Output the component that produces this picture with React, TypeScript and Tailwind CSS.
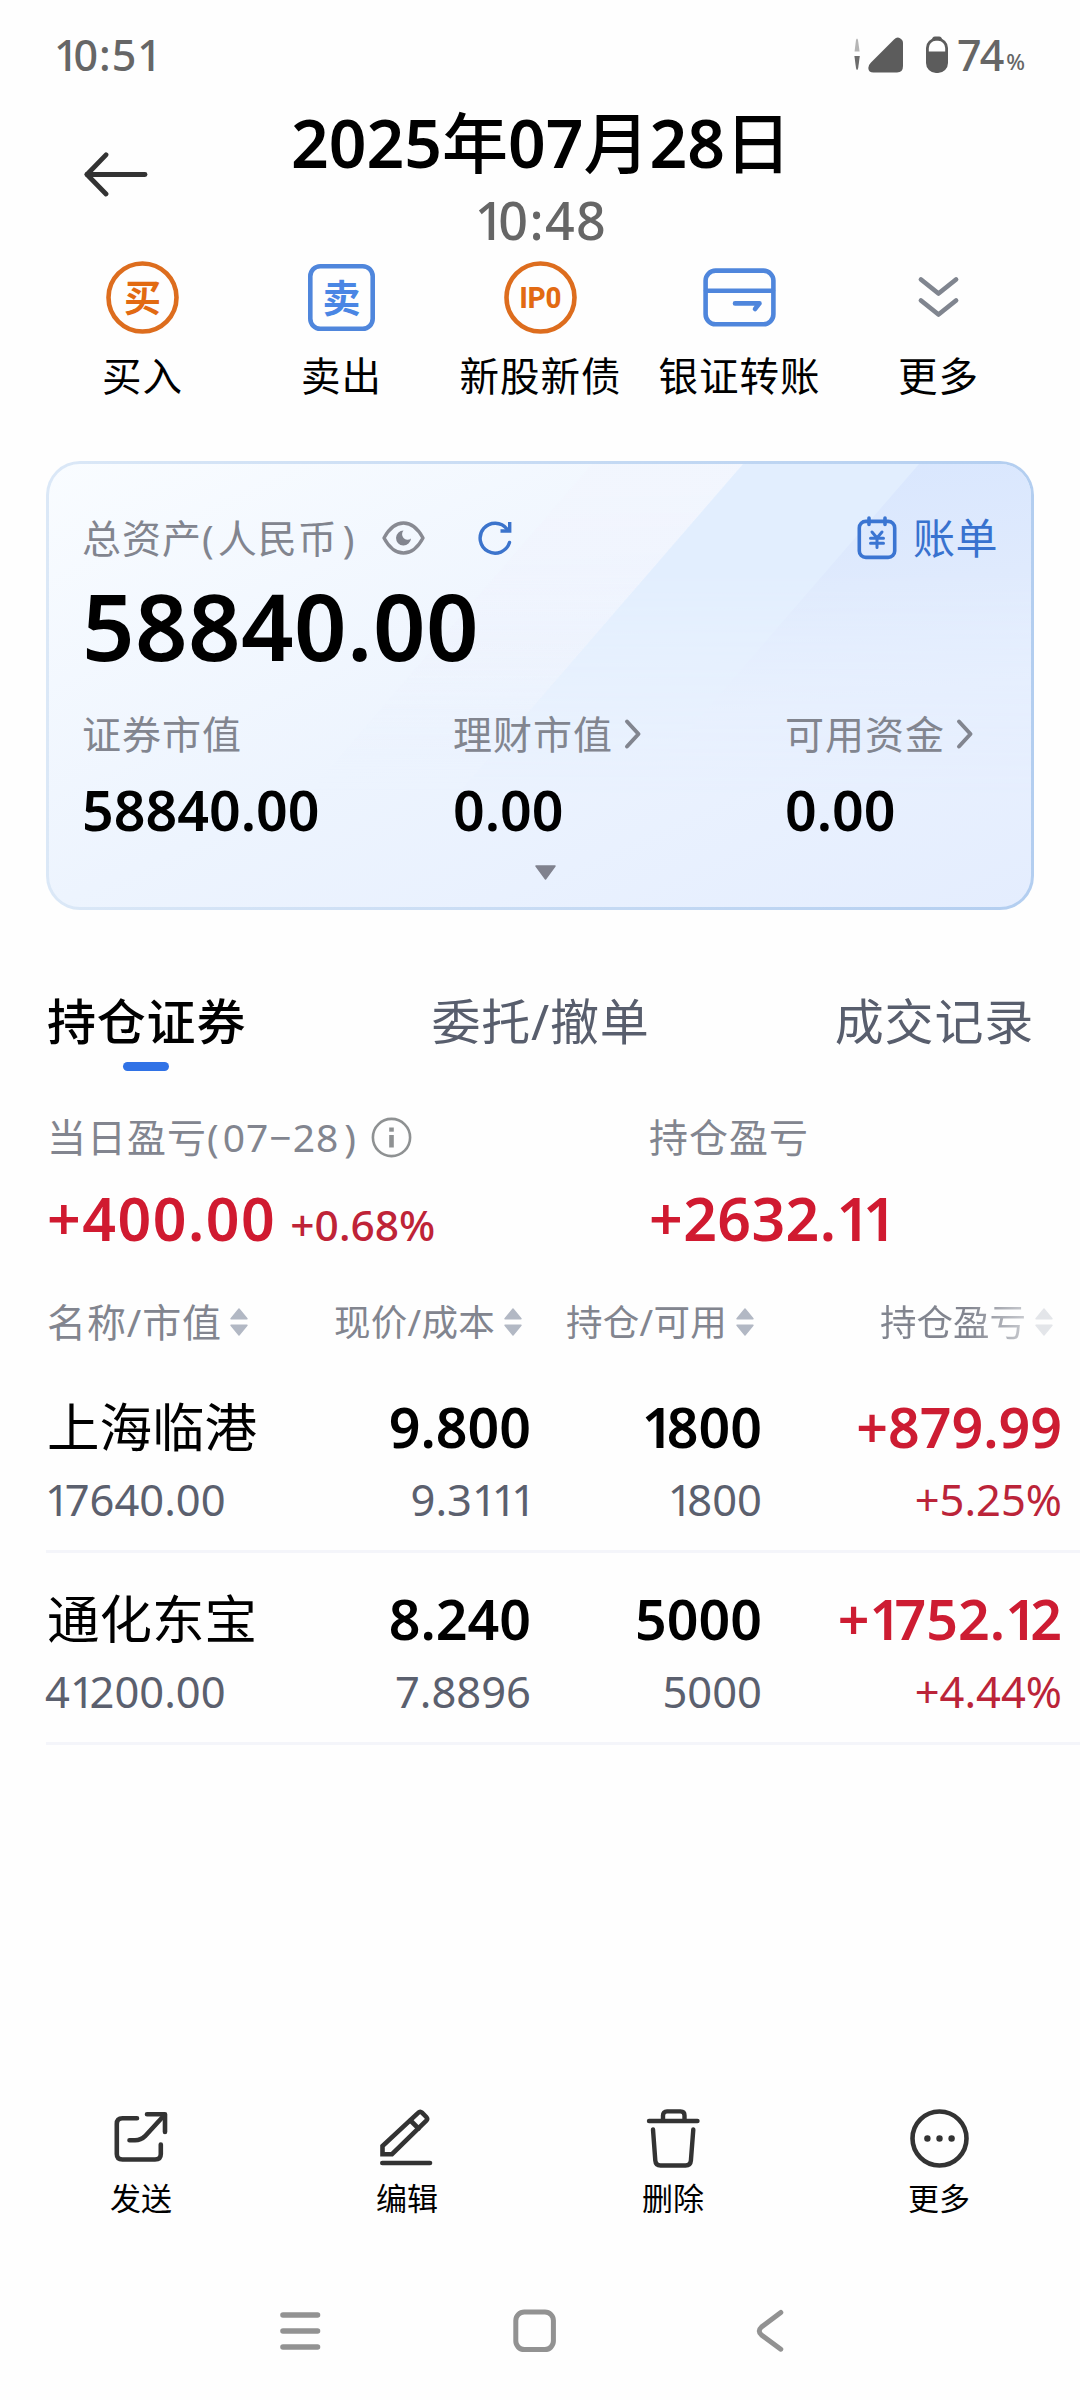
import React from "react";

const ORANGE = "#dd6d1e";
const BLUE = "#4f86dc";
const GREY = "#82858f";
const DARK = "#333333";

/* Figures with a narrow "1", as in the system's proportional digits. */
function Num({ children }: { children: string }) {
  return (
    <>
      {children.split(/(1+)/).filter(Boolean).map((part, i) =>
        part[0] === "1" ? <span key={i} className="tracking-[-0.12em]">{part}</span> : part
      )}
    </>
  );
}

function BuyIcon() {
  return (
    <svg width="73" height="73" viewBox="0 0 73 73" fill="none">
      <circle cx="36.5" cy="36.5" r="34" stroke={ORANGE} strokeWidth="4.6" />
      <text x="36.5" y="50.5" textAnchor="middle" fontSize="37" fontWeight="700" fill="#e26a12" className="font-['Noto_Sans_CJK_SC',sans-serif]">买</text>
    </svg>
  );
}

function SellIcon() {
  return (
    <svg width="73" height="73" viewBox="0 0 73 73" fill="none">
      <rect x="5.3" y="5.3" width="62.4" height="62.4" rx="10" stroke={BLUE} strokeWidth="4.6" />
      <text x="36.5" y="50.5" textAnchor="middle" fontSize="38" fontWeight="700" fill="#4a86e4" className="font-['Noto_Sans_CJK_SC',sans-serif]">卖</text>
    </svg>
  );
}

function IpoIcon() {
  return (
    <svg width="73" height="73" viewBox="0 0 73 73" fill="none">
      <circle cx="36.5" cy="36.5" r="34" stroke={ORANGE} strokeWidth="4.6" />
      <text x="15.5" y="47" textLength="42" lengthAdjust="spacingAndGlyphs" fontSize="30" fontWeight="800" fill="#e26a12" className="font-['Roboto',sans-serif]">IP0</text>
    </svg>
  );
}

function CardIcon() {
  return (
    <svg width="73" height="73" viewBox="0 0 73 73" fill="none" stroke={BLUE} strokeWidth="4.6" strokeLinecap="round" strokeLinejoin="round">
      <rect x="2.6" y="9.6" width="67.8" height="53.6" rx="10" />
      <path d="M3 29.8H70" />
      <path d="M32 42.4H56.5L52 48" />
    </svg>
  );
}

function ChevronsIcon() {
  return (
    <svg width="73" height="73" viewBox="0 0 73 73" fill="none" stroke="#80858f" strokeWidth="4.8" strokeLinecap="round" strokeLinejoin="round">
      <path d="M19 18.5L36.5 32.5L54 18.5" />
      <path d="M19 39.5L36.5 53.5L54 39.5" />
    </svg>
  );
}

function ChevronRight() {
  return (
    <svg width="18" height="32" viewBox="0 0 18 32" fill="none" stroke={GREY} strokeWidth="4" strokeLinecap="round" strokeLinejoin="round">
      <path d="M3 3.5L14.5 16L3 28.5" />
    </svg>
  );
}

function Sort() {
  return (
    <svg width="18" height="28" viewBox="0 0 18 28" fill="#b2b8c4" stroke="#b2b8c4" strokeWidth="1.4" strokeLinejoin="round">
      <path d="M9 1L17 10.7H1Z" />
      <path d="M9 27L17 17.3H1Z" />
    </svg>
  );
}

function SendIcon() {
  return (
    <svg width="59" height="59" viewBox="0 0 59 59" fill="none" stroke={DARK} strokeWidth="4.6" strokeLinecap="round" strokeLinejoin="round">
      <path d="M25 9.3H10.5Q4.8 9.3 4.8 15V45Q4.8 50.5 10.5 50.5H43Q48.8 50.5 48.8 45V35.5" />
      <path d="M35 5.2H53V23" />
      <path d="M17.5 31.3H23Q29 31.3 33 27.2L52 6.5" />
    </svg>
  );
}

function EditIcon() {
  return (
    <svg width="59" height="59" viewBox="0 0 59 59" fill="none" stroke={DARK} strokeWidth="4.6" strokeLinecap="round">
      <path d="M4.5 37V45.2H14L48.3 11.6Q50 9.8 48.3 8L44 3.6Q42.2 1.8 40.4 3.6L4.5 37Z" strokeLinejoin="miter" />
      <path d="M32.5 11.5L40.5 19.5" />
      <path d="M4.3 54H52" />
    </svg>
  );
}

function TrashIcon() {
  return (
    <svg width="59" height="59" viewBox="0 0 59 59" fill="none" stroke={DARK} strokeWidth="4.4" strokeLinecap="round" strokeLinejoin="round">
      <path d="M5 12H53.5" />
      <path d="M19 11V6.5Q19 2.4 23 2.4H36.5Q40.5 2.4 40.5 6.5V11" />
      <path d="M9 20.5L11.3 51.5Q11.7 56.5 16.5 56.5H41.5Q46.5 56.5 46.9 51.5L49.3 20.5" />
    </svg>
  );
}

function MoreIcon() {
  return (
    <svg width="59" height="59" viewBox="0 0 59 59" fill="none">
      <circle cx="29.5" cy="29.5" r="27" stroke={DARK} strokeWidth="4.6" />
      <g fill={DARK}>
        <circle cx="17.4" cy="29.5" r="3.2" />
        <circle cx="29.5" cy="29.5" r="3.2" />
        <circle cx="41.6" cy="29.5" r="3.2" />
      </g>
    </svg>
  );
}

const actions = [
  { label: "买入", icon: <BuyIcon /> },
  { label: "卖出", icon: <SellIcon /> },
  { label: "新股新债", icon: <IpoIcon /> },
  { label: "银证转账", icon: <CardIcon /> },
  { label: "更多", icon: <ChevronsIcon /> },
];

const tools = [
  { label: "发送", icon: <SendIcon /> },
  { label: "编辑", icon: <EditIcon /> },
  { label: "删除", icon: <TrashIcon /> },
  { label: "更多", icon: <MoreIcon /> },
];

const holdings = [
  { name: "上海临港", value: "17640.00", price: "9.800", cost: "9.3111", qty: "1800", avail: "1800", gain: "879.99", pct: "5.25%" },
  { name: "通化东宝", value: "41200.00", price: "8.240", cost: "7.8896", qty: "5000", avail: "5000", gain: "1752.12", pct: "4.44%" },
];

function StatusBar() {
  return (
    <div className="flex h-[106px] items-center pl-[54px] pr-[55px] pt-[3px] text-[#666666]">
      <span className="text-[43px] font-medium leading-[60px] tracking-[1px]"><Num>10:51</Num></span>
      <div className="ml-auto flex items-center">
        <svg width="50" height="36" viewBox="0 0 50 36">
          <path d="M0.6 14.5L2 3Q3 0 4 3L5.6 14.5Z" fill="#b5b5b5" />
          <path d="M0.4 19H5.8L4.2 31Q3 35 2 31Z" fill="#6c6c6c" />
          <path d="M17 25.5L40 2.5Q43 -0.5 46 1.2Q49 2.8 49 6V29Q49 35.5 43 35.5H19.5Q14.5 35.5 14.3 31Q14.3 28 17 25.5Z" fill="#5c5c5c" />
        </svg>
        <svg className="ml-[22px]" width="22" height="37" viewBox="0 0 22 37" fill="none">
          <path d="M6 4Q6 0.5 9 0.5H13Q16 0.5 16 4Z" fill="#5c5c5c" />
          <rect x="1.4" y="3.4" width="19.2" height="32.2" rx="8.5" stroke="#5c5c5c" strokeWidth="2.8" />
          <path d="M1.4 15.5H20.6V27Q20.6 35.6 12 35.6H10Q1.4 35.6 1.4 27Z" fill="#5c5c5c" />
        </svg>
        <span className="ml-[9px] text-[43px] font-medium leading-[60px] tracking-[-2px]">74</span>
        <span className="ml-[4px] mt-[12px] text-[22px] font-medium leading-[30px]">%</span>
      </div>
    </div>
  );
}

function Header() {
  return (
    <header className="flex h-[150px]">
      <div className="w-[163px] pl-[83px] pt-[46px]">
        <svg width="65" height="45" viewBox="0 0 65 45" fill="none" stroke={DARK} strokeWidth="4.8" strokeLinecap="round" strokeLinejoin="round">
          <path d="M62 22.5H4" />
          <path d="M23 2.8L4 22.5L23 42" />
        </svg>
      </div>
      <div className="flex flex-1 flex-col items-center pt-[3px]">
        <h1 className="whitespace-nowrap text-[66px] font-[560] leading-[66px] text-black">
          2025<span className="font-medium">年</span>07<span className="font-medium">月</span>28<span className="font-medium">日</span>
        </h1>
        <div className="mt-[15px] text-[52px] font-medium leading-[60px] tracking-[1.4px] text-[#666666]"><Num>10:48</Num></div>
      </div>
      <div className="w-[161px]" />
    </header>
  );
}

function AssetCard() {
  return (
    <section className="relative mx-[46px] h-[449px] overflow-hidden rounded-[34px] bg-gradient-to-r from-[#dbe8f7] to-[#b3cef0] p-[3px]">
      <div className="relative h-full overflow-hidden rounded-[31px] bg-gradient-to-br from-[#f9fcff] via-[#edf4fe] to-[#e4edfe]">
        <svg className="absolute inset-0" width="982" height="443" viewBox="0 0 982 443" aria-hidden="true">
          <defs>
            <linearGradient id="glow" x1="0" y1="0" x2="0" y2="1">
              <stop offset="0" stopColor="#f2f6fe" />
              <stop offset="0.6" stopColor="#eef2fd" stopOpacity="0.6" />
              <stop offset="1" stopColor="#e6effe" stopOpacity="0" />
            </linearGradient>
            <linearGradient id="mid" x1="0" y1="0" x2="0" y2="1">
              <stop offset="0" stopColor="#e2eefe" />
              <stop offset="0.6" stopColor="#e2eefe" />
              <stop offset="1" stopColor="#e4edfe" />
            </linearGradient>
            <linearGradient id="edge" x1="0" y1="0" x2="0.12" y2="1">
              <stop offset="0" stopColor="#d8e6fe" />
              <stop offset="0.35" stopColor="#dfeafd" />
              <stop offset="0.6" stopColor="#e3edfe" />
              <stop offset="1" stopColor="#e4edfe" />
            </linearGradient>
            <linearGradient id="fade" x1="0" y1="0" x2="0" y2="1">
              <stop offset="0.25" stopColor="#ffffff" />
              <stop offset="0.75" stopColor="#000000" />
            </linearGradient>
            <mask id="fadeMask">
              <rect width="982" height="443" fill="url(#fade)" />
            </mask>
          </defs>
          <g mask="url(#fadeMask)">
            <path d="M543 0H694L400 340H250Z" fill="url(#glow)" />
            <path d="M694 0H982V443H311Z" fill="url(#mid)" />
            <path d="M870 0H982V443H487Z" fill="url(#edge)" />
          </g>
        </svg>
        <div className="relative flex h-full flex-col pl-[33px] pt-[52px]">
          <div className="flex h-[44px] items-center">
            <span className="text-[39px] leading-[44px] tracking-[1px] text-[#82858f]">
              总资产<span className="mr-[3px]">(</span>人民币<span className="ml-[5px]">)</span>
            </span>
            <svg className="ml-[27px]" width="43" height="34" viewBox="0 0 43 34" fill="none">
              <path d="M2 17Q10 2 21.5 2T41 17Q33 32 21.5 32T2 17Z" stroke="#888a92" strokeWidth="3.4" strokeLinejoin="round" />
              <path d="M21.5 9.5A7.5 7.5 0 1 0 29 17.5A5.5 5.5 0 0 1 21.5 9.5Z" fill="#82858f" />
            </svg>
            <svg className="ml-[53px]" width="34" height="34" viewBox="0 0 34 34" fill="none" stroke="#3c74cc" strokeWidth="3.4">
              <path d="M31.5 21.5A15 15 0 1 1 29 8" strokeLinecap="round" />
              <path d="M31.7 1V10H22.5" strokeLinejoin="miter" />
            </svg>
            <div className="ml-auto mr-[33px] flex items-center">
              <svg width="40" height="44" viewBox="0 0 40 44" fill="none" stroke="#3b75d2" strokeWidth="3.6" strokeLinecap="round">
                <rect x="2.3" y="5.4" width="35.4" height="36" rx="6.5" />
                <path d="M12 2V8.5M28 2V8.5" />
                <path d="M15 16L20 22L25 16M20 22V31.5M13.5 22.3H26.5M13.5 27.3H26.5" strokeWidth="3" />
              </svg>
              <span className="ml-[16px] text-[42px] leading-[44px] tracking-[0.5px] text-[#3872cf]">账单</span>
            </div>
          </div>
          <div className="mt-[20px] text-[92px] font-[560] leading-[92px] tracking-[0.4px] text-black">58840.00</div>
          <div className="mt-[42px] grid grid-cols-[371px_332px_1fr]">
            {[
              { label: "证券市值", value: "58840.00", link: false },
              { label: "理财市值", value: "0.00", link: true },
              { label: "可用资金", value: "0.00", link: true },
            ].map((f) => (
              <div key={f.label}>
                <div className="flex h-[40px] items-center text-[39px] leading-[40px] tracking-[1px] text-[#82858f]">
                  {f.label}
                  {f.link && <span className="ml-[11px]"><ChevronRight /></span>}
                </div>
                <div className="mt-[28px] text-[55.5px] font-[560] leading-[56px] text-black">{f.value}</div>
              </div>
            ))}
          </div>
          <svg className="ml-[453px] mt-[27px]" width="21" height="15" viewBox="0 0 21 15" fill="#80828e" stroke="#80828e" strokeWidth="1.5" strokeLinejoin="round">
            <path d="M1 1H20L10.5 14Z" />
          </svg>
        </div>
      </div>
    </section>
  );
}

function Tabs() {
  return (
    <nav className="mt-[81px] flex items-start justify-between pl-[47px] pr-[46px] text-[49px] leading-[60px] tracking-[0.8px] text-[#585e6d]">
      <div className="flex flex-col items-center">
        <span className="font-medium text-black">持仓证券</span>
        <span className="mr-[2px] mt-[11px] h-[9px] w-[46px] rounded-full bg-[#3072e6]" />
      </div>
      <span>委托/撤单</span>
      <span>成交记录</span>
    </nav>
  );
}

function Summary() {
  return (
    <section className="mt-[44px] grid grid-cols-[602px_1fr] pl-[47px]">
      <div>
        <div className="flex h-[44px] items-center text-[39px] leading-[44px] tracking-[1px] text-[#82858f]">
          <span>当日盈亏<span className="mr-[3px]">(</span>07−28<span className="ml-[5px]">)</span></span>
          <svg className="ml-[14px]" width="41" height="41" viewBox="0 0 41 41" fill="none">
            <circle cx="20.5" cy="20.5" r="18.6" stroke="#8e9192" strokeWidth="2.6" />
            <rect x="18.2" y="10.5" width="4.6" height="4.2" fill="#8e9192" />
            <rect x="18.2" y="18" width="4.6" height="12.5" fill="#8e9192" />
          </svg>
        </div>
        <div className="mt-[29px] flex h-[60px] items-baseline leading-[60px] text-[#d01a30]">
          <span className="text-[59px] font-[570] tracking-[1.5px]">+400.00</span>
          <span className="ml-[14px] text-[42.5px] font-medium text-[#bf2337]">+0.68%</span>
        </div>
      </div>
      <div>
        <div className="h-[44px] text-[39px] leading-[44px] tracking-[1px] text-[#82858f]">持仓盈亏</div>
        <div className="mt-[29px] text-[59px] font-[570] leading-[60px] tracking-[0.4px] text-[#d01a30]"><Num>+2632.11</Num></div>
      </div>
    </section>
  );
}

function Holdings() {
  return (
    <section className="mt-[52px]">
      <div className="grid h-[44px] grid-cols-[248px_274px_232px_299px] text-[36.5px] leading-[44px] text-[#82858f]">
        <div className="flex items-center justify-between pl-[47px]">
          <span className="text-[39px] tracking-[0.9px]">名称/市值</span>
          <Sort />
        </div>
        <div className="flex items-center justify-end gap-[9px]"><span className="tracking-[0.3px]">现价/成本</span><Sort /></div>
        <div className="flex items-center justify-end gap-[9px]"><span className="tracking-[0.3px]">持仓/可用</span><Sort /></div>
        <div className="flex items-center justify-end gap-[9px]">
          <span className="bg-gradient-to-r from-[#82858f] from-60% to-[#c9cbd0] bg-clip-text text-transparent">持仓盈亏</span>
          <span className="opacity-35"><Sort /></span>
        </div>
      </div>
      <div className="ml-[46px] mt-[17px]">
        {holdings.map((h) => (
          <div key={h.name} className="grid h-[192px] grid-cols-[224px_261px_231px_300px] border-b-[3px] border-[#f4f5fa] pt-[36px] text-right">
            <div className="pl-[1px] text-left">
              <div className="whitespace-nowrap text-[52.5px] leading-[60px] text-black">{h.name}</div>
              <div className="-ml-[2px] mt-[20px] text-[43.5px] leading-[44px] text-[#5b606e]"><Num>{h.value}</Num></div>
            </div>
            <div>
              <div className="text-[55.5px] font-[560] leading-[60px] text-black"><Num>{h.price}</Num></div>
              <div className="mt-[20px] text-[43.5px] leading-[44px] text-[#5b606e]"><Num>{h.cost}</Num></div>
            </div>
            <div>
              <div className="text-[55.5px] font-[560] leading-[60px] text-black"><Num>{h.qty}</Num></div>
              <div className="mt-[20px] text-[43.5px] leading-[44px] text-[#5b606e]"><Num>{h.avail}</Num></div>
            </div>
            <div>
              <div className="text-[55.5px] font-[560] leading-[60px] text-[#cd1c32]"><Num>{"+" + h.gain}</Num></div>
              <div className="mt-[20px] text-[43.5px] leading-[44px] text-[#bb2439]">{"+" + h.pct}</div>
            </div>
          </div>
        ))}
      </div>
    </section>
  );
}

function BottomNav() {
  return (
    <div className="mt-[91px] flex h-[48px] items-center justify-center gap-[187px] pr-[10px]">
      <svg width="48" height="48" viewBox="0 0 48 48" stroke="#929292" strokeWidth="5.6" strokeLinecap="round">
        <path d="M7 8H41.5M7 24H41.5M7 40H41.5" />
      </svg>
      <svg width="48" height="48" viewBox="0 0 48 48" fill="none" stroke="#929292" strokeWidth="5">
        <rect x="4.8" y="5" width="37.6" height="37.6" rx="8.5" />
      </svg>
      <svg width="48" height="48" viewBox="0 0 48 48" fill="none" stroke="#929292" strokeWidth="5" strokeLinecap="round">
        <path d="M34.8 5.5L15.5 20Q11 24 15.5 28L34.8 42.2" />
      </svg>
    </div>
  );
}

export default function App() {
  return (
    <div className="flex h-[2400px] w-[1080px] flex-col overflow-hidden bg-[#fefefe] font-['Noto_Sans','Noto_Sans_CJK_SC',sans-serif]">
      <StatusBar />
      <Header />
      <div className="grid h-[205px] grid-cols-5 pl-[43px] pr-[42px] pt-[5px]">
        {actions.map((a) => (
          <div key={a.label} className="flex flex-col items-center">
            {a.icon}
            <span className="mt-[18px] whitespace-nowrap text-[39.5px] leading-[48px] tracking-[1px] text-black">{a.label}</span>
          </div>
        ))}
      </div>
      <AssetCard />
      <Tabs />
      <Summary />
      <Holdings />
      <div className="mt-[364px] grid grid-cols-4 px-[8px]">
        {tools.map((t) => (
          <div key={t.label} className="flex flex-col items-center">
            {t.icon}
            <span className="mt-[12px] text-[31px] leading-[36px] text-black">{t.label}</span>
          </div>
        ))}
      </div>
      <BottomNav />
    </div>
  );
}
